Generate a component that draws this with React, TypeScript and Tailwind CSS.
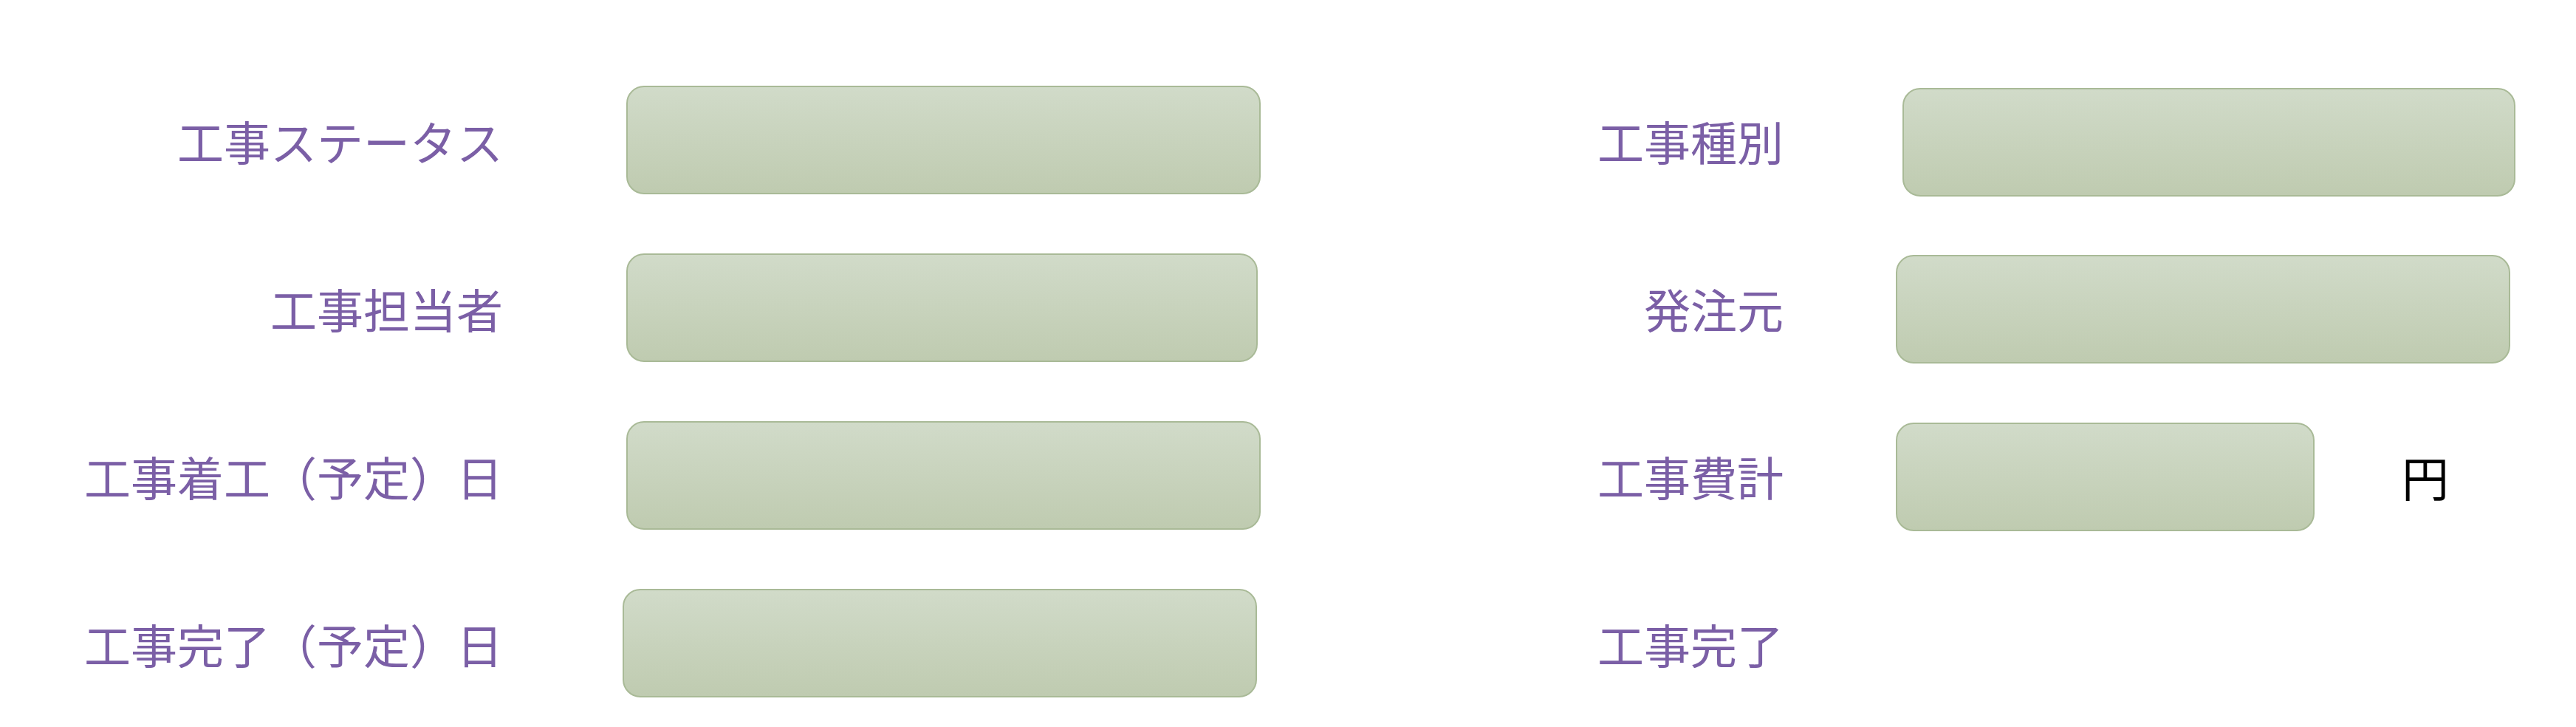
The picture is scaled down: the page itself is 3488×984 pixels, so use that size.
const font = {
  fontFamily: '"Noto Sans CJK JP", "Noto Sans", sans-serif',
};

function Field({ className }: { className: string }) {
  return (
    <div
      className={`h-[147px] shrink-0 rounded-[24px] border-2 border-[#a9ba97] bg-linear-to-b from-[#d1dbc9] to-[#bfcbb0] ${className}`}
    />
  );
}

function Label({ text, className }: { text: string; className: string }) {
  return (
    <div
      className={`shrink-0 text-right text-[63px] leading-none text-[#7b5fa6] ${className}`}
    >
      {text}
    </div>
  );
}

export default function App() {
  return (
    <div
      className="w-[3488px] h-[984px] bg-white pt-[116px] flex flex-col gap-[80px]"
      style={font}
    >
      <div className="flex items-center h-[147px]">
        <Label text="工事ステータス" className="w-[681px]" />
        <Field className="ml-[167px] w-[859px]" />
        <Label text="工事種別" className="w-[708px]" />
        <Field className="ml-[161px] w-[830px] mt-[6px]" />
      </div>
      <div className="flex items-center h-[147px]">
        <Label text="工事担当者" className="w-[681px]" />
        <Field className="ml-[167px] w-[855px]" />
        <Label text="発注元" className="w-[712px]" />
        <Field className="ml-[152px] w-[832px] mt-[4px]" />
      </div>
      <div className="flex items-center h-[147px]">
        <Label text="工事着工（予定）日" className="w-[681px]" />
        <Field className="ml-[167px] w-[859px]" />
        <Label text="工事費計" className="w-[708px]" />
        <Field className="ml-[152px] w-[567px] mt-[4px]" />
        <div className="ml-[118px] text-[64px] leading-none text-black">円</div>
      </div>
      <div className="flex items-center h-[147px]">
        <Label text="工事完了（予定）日" className="w-[681px]" />
        <Field className="ml-[162px] w-[859px]" />
        <Label text="工事完了" className="w-[713px]" />
      </div>
    </div>
  );
}
